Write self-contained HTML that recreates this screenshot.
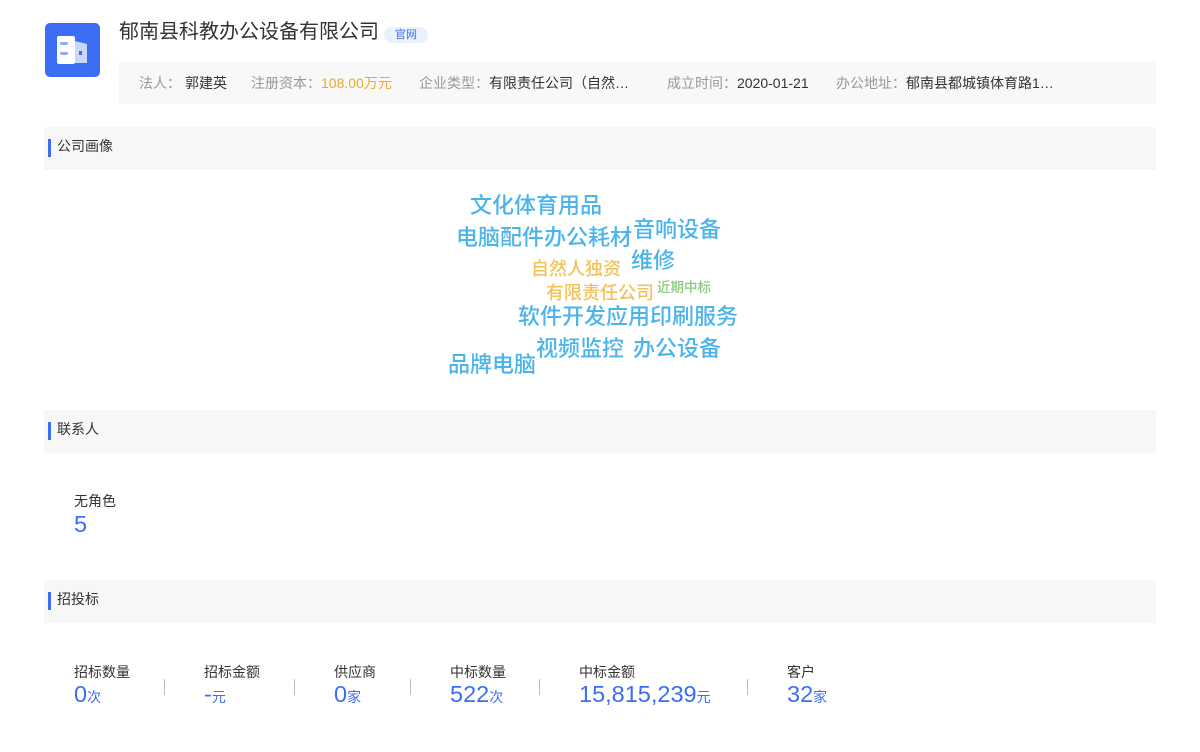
<!DOCTYPE html>
<html><head><meta charset="utf-8"><style>
*{margin:0;padding:0;box-sizing:border-box}
body{width:1200px;height:752px;background:#fff;position:relative;font-family:"Liberation Sans","Noto Sans CJK SC",sans-serif;color:#333;overflow:hidden}
.a{position:absolute;white-space:nowrap;line-height:1}
.bar{position:absolute;left:44px;width:1112px;height:43px;background:#f7f7f7}
.bar i{position:absolute;left:4px;top:12px;width:3px;height:18px;background:#3b6ef5}
.bar span{position:absolute;left:13px;top:12px;font-size:14px;color:#333;line-height:1}
.w{position:absolute;white-space:nowrap;line-height:1;font-weight:500;color:#4bb4ea;font-size:22px}
.y{color:#f3c25a;font-size:18px}
.lb{font-size:14px;color:#333}
.vl{font-size:23.5px;color:#3b6ef5}
.vl small{font-size:14px}
.dv{position:absolute;top:679px;width:1px;height:16px;background:#bbb}
.g{color:#999}
.i{font-size:14px}
</style></head><body>
<div class="a" style="left:45px;top:23px;width:55px;height:54px;background:#3b6ef5;border-radius:5px">
<svg width="55" height="54" viewBox="0 0 55 54"><rect x="12" y="13" width="18" height="28" rx="2" fill="#fff"/><path d="M30 18 L42 21 V40 H30 Z" fill="#c8d8fb"/><rect x="15" y="19" width="8" height="3" rx="1.5" fill="#8fb0f8"/><rect x="15" y="29" width="8" height="3" rx="1.5" fill="#8fb0f8"/><rect x="34" y="28" width="3" height="4" fill="#3b6ef5"/></svg></div>
<div class="a" style="left:119px;top:22px;font-size:20px;color:#333">郁南县科教办公设备有限公司</div>
<div class="a" style="left:384px;top:27px;width:44px;height:16px;background:#eaf1fc;border-radius:8px;color:#3b6ef5;font-size:11px;line-height:16px;text-align:center">官网</div>
<div class="a" style="left:119px;top:62px;width:1037px;height:42px;background:#f8f8f8"></div>
<div class="a i" style="left:139px;top:76px"><span class="g">法人：</span></div>
<div class="a i" style="left:185px;top:76px">郭建英</div>
<div class="a i" style="left:251px;top:76px"><span class="g">注册资本：</span><span style="color:#f0a830">108.00万元</span></div>
<div class="a i" style="left:419px;top:76px"><span class="g">企业类型：</span>有限责任公司（自然…</div>
<div class="a i" style="left:667px;top:76px"><span class="g">成立时间：</span>2020-01-21</div>
<div class="a i" style="left:836px;top:76px"><span class="g">办公地址：</span>郁南县都城镇体育路1…</div>

<div class="bar" style="top:127px"><i></i><span>公司画像</span></div>
<div class="w" style="left:470px;top:195px">文化体育用品</div>
<div class="w" style="left:456px;top:227px">电脑配件办公耗材</div>
<div class="w" style="left:633px;top:219px">音响设备</div>
<div class="w" style="left:631px;top:250px">维修</div>
<div class="w y" style="left:531px;top:260px">自然人独资</div>
<div class="w y" style="left:546px;top:284px">有限责任公司</div>
<div class="w" style="left:657px;top:281px;font-size:13.5px;color:#8cc97a">近期中标</div>
<div class="w" style="left:518px;top:306px">软件开发应用印刷服务</div>
<div class="w" style="left:536px;top:338px">视频监控</div>
<div class="w" style="left:633px;top:338px">办公设备</div>
<div class="w" style="left:448px;top:354px">品牌电脑</div>

<div class="bar" style="top:410px"><i></i><span>联系人</span></div>
<div class="a lb" style="left:74px;top:494px">无角色</div>
<div class="a vl" style="left:74px;top:513px">5</div>

<div class="bar" style="top:580px"><i></i><span>招投标</span></div>
<div class="a lb" style="left:74px;top:665px">招标数量</div><div class="a vl" style="left:74px;top:683px">0<small>次</small></div>
<div class="dv" style="left:164px"></div>
<div class="a lb" style="left:204px;top:665px">招标金额</div><div class="a vl" style="left:204px;top:683px">-<small>元</small></div>
<div class="dv" style="left:294px"></div>
<div class="a lb" style="left:334px;top:665px">供应商</div><div class="a vl" style="left:334px;top:683px">0<small>家</small></div>
<div class="dv" style="left:410px"></div>
<div class="a lb" style="left:450px;top:665px">中标数量</div><div class="a vl" style="left:450px;top:683px">522<small>次</small></div>
<div class="dv" style="left:539px"></div>
<div class="a lb" style="left:579px;top:665px">中标金额</div><div class="a vl" style="left:579px;top:683px">15,815,239<small>元</small></div>
<div class="dv" style="left:747px"></div>
<div class="a lb" style="left:787px;top:665px">客户</div><div class="a vl" style="left:787px;top:683px">32<small>家</small></div>
</body></html>
